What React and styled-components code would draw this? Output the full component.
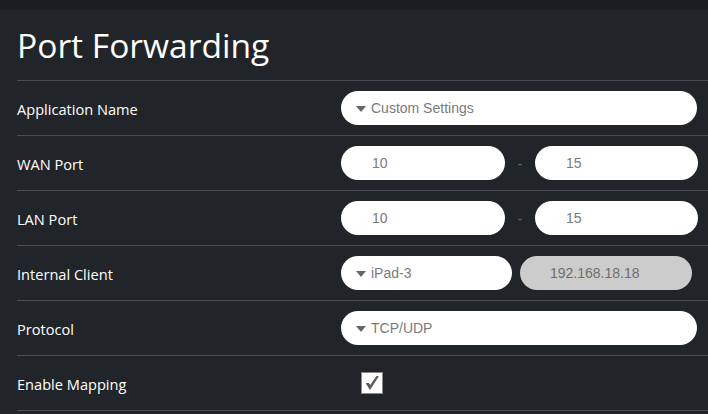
import React from 'react';
import styled, { createGlobalStyle } from 'styled-components';

const GlobalStyle = createGlobalStyle`
    html, body {
        margin: 0;
        padding: 0;
        background: #212529;
    }
    body {
        font-family: "Open Sans", "Liberation Sans", sans-serif;
    }
`

const Page = styled.div`
    width: 708px;
    height: 414px;
    overflow: hidden;
    background: #212529;
`

const TopStrip = styled.div`
    height: 10px;
    background: #1b1e21;
`

const Section = styled.div`
    padding-left: 17px;
`

const Title = styled.h1`
    margin: 0;
    height: 71px;
    box-sizing: border-box;
    padding-top: 12px;
    font-family: "Open Sans", "Liberation Sans", sans-serif;
    font-weight: 400;
    font-size: 33.6px;
    line-height: 46px;
    color: #fff;
    border-bottom: 1px solid #4a4e52;
`

const Row = styled.div`
    display: grid;
    grid-template-columns: 324px 1fr;
    align-items: center;
    height: 55px;
    box-sizing: border-box;
    border-bottom: 1px solid #4a4e52;
`

const Label = styled.div`
    color: #fff;
    font-size: 14.6px;
    padding-top: 1px;
`

const Controls = styled.div`
    display: flex;
    align-items: center;
`

const Pill = styled.div`
    box-sizing: border-box;
    width: ${p => p.width}px;
    height: 34px;
    border-radius: 17px;
    background: ${p => p.disabled ? '#cccccc' : '#ffffff'};
    display: flex;
    align-items: center;
    padding-left: ${p => p.pad}px;
    font-family: "Liberation Sans", Arial, sans-serif;
    font-size: 14px;
    color: ${p => p.disabled ? '#6e6e6e' : '#7a7a7a'};
`

const Arrow = styled.span`
    width: 0;
    height: 0;
    border-left: 5px solid transparent;
    border-right: 5px solid transparent;
    border-top: 6px solid #666;
    margin-right: 5px;
    margin-top: 1px;
`

const Dash = styled.div`
    width: 30px;
    text-align: center;
    color: #6a6e72;
    font-family: "Liberation Sans", Arial, sans-serif;
    font-size: 13px;
`

const Gap = styled.div`
    width: ${p => p.size}px;
`

const Check = styled.div`
    box-sizing: border-box;
    width: 22px;
    height: 22px;
    margin-left: 20px;
    background: #fff;
    border: 1px solid #8a8a8a;
    display: flex;
    align-items: center;
    justify-content: center;
`

const Select = ({ width, children }) => (
    <Pill width={width} pad={15}>
        <Arrow />
        {children}
    </Pill>
)

const App = () => {
    return (
        <Page>
            <GlobalStyle />
            <TopStrip />
            <Section>
                <Title>Port Forwarding</Title>
                <Row>
                    <Label>Application Name</Label>
                    <Controls>
                        <Select width={356}>Custom Settings</Select>
                    </Controls>
                </Row>
                <Row>
                    <Label>WAN Port</Label>
                    <Controls>
                        <Pill width={164} pad={31}>10</Pill>
                        <Dash>-</Dash>
                        <Pill width={163} pad={31}>15</Pill>
                    </Controls>
                </Row>
                <Row>
                    <Label>LAN Port</Label>
                    <Controls>
                        <Pill width={164} pad={31}>10</Pill>
                        <Dash>-</Dash>
                        <Pill width={163} pad={31}>15</Pill>
                    </Controls>
                </Row>
                <Row>
                    <Label>Internal Client</Label>
                    <Controls>
                        <Select width={171}>iPad-3</Select>
                        <Gap size={8} />
                        <Pill width={172} pad={30} disabled>192.168.18.18</Pill>
                    </Controls>
                </Row>
                <Row>
                    <Label>Protocol</Label>
                    <Controls>
                        <Select width={356}>TCP/UDP</Select>
                    </Controls>
                </Row>
                <Row>
                    <Label>Enable Mapping</Label>
                    <Controls>
                        <Check>
                            <svg width="18" height="18" viewBox="0 0 18 18">
                                <path d="M3.5 9.5 L7 15 L15 2.5 L13.8 2.5 L7.2 12.2 L5.6 9.5 Z" fill="#5a5a5a" stroke="#5a5a5a" strokeWidth="1.2" strokeLinejoin="round" />
                            </svg>
                        </Check>
                    </Controls>
                </Row>
            </Section>
        </Page>
    );
}

export default App;
